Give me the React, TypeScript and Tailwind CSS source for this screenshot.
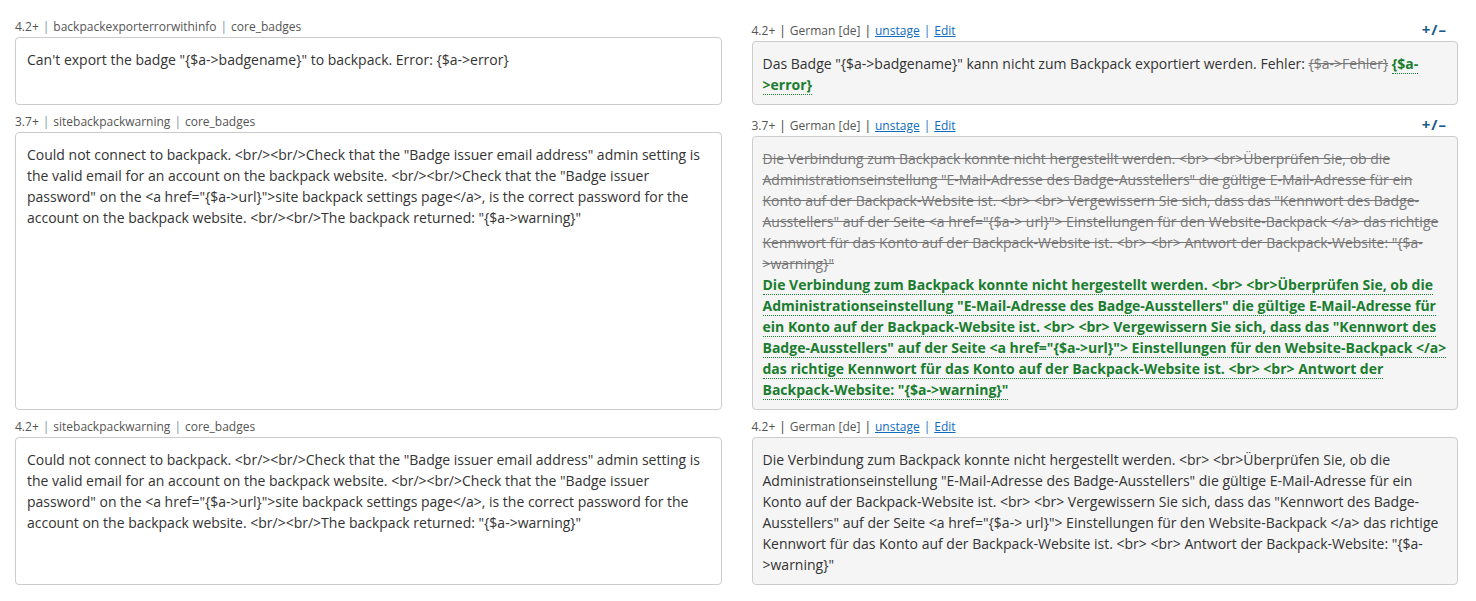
const Meta = ({ version, rest }: { version: string; rest: string[] }) => (
  <div className="text-[12px] leading-[20px] text-[#555]">
    {version}
    {rest.map((r) => (
      <span key={r}>
        <span className="mx-[4px] text-[#7a8fa6]">|</span>
        {r}
      </span>
    ))}
  </div>
);

const LangMeta = ({ version, toggle }: { version: string; toggle?: boolean }) => (
  <div className="flex items-end justify-between">
    <div className="text-[12px] leading-[20px] text-[#555]">
      {version}
      <span className="mx-[4px] text-[#333]">|</span>
      German [de]
      <span className="mx-[4px] text-[#333]">|</span>
      <a className="text-[#0f6cbf] underline">unstage</a>
      <span className="mx-[4px] text-[#0f6cbf]">|</span>
      <a className="text-[#0f6cbf] underline">Edit</a>
    </div>
    {toggle && (
      <span className="mr-[11px] text-[15px] leading-[24px] font-bold tracking-[1px] text-[#1a5a8c]">+/–</span>
    )}
  </div>
);

const Del = ({ children }: { children: React.ReactNode }) => <del className="text-[#777]">{children}</del>;

const Ins = ({ children }: { children: React.ReactNode }) => (
  <ins className="border-b border-dotted border-[#1a7d2f] font-bold text-[#1a7d2f] no-underline">{children}</ins>
);

const enError = 'Can\'t export the badge "{$a->badgename}" to backpack. Error: {$a->error}';
const deError = 'Das Badge "{$a->badgename}" kann nicht zum Backpack exportiert werden. Fehler: ';

const enText =
  'Could not connect to backpack. <br/><br/>Check that the "Badge issuer email address" admin setting is the valid email for an account on the backpack website. <br/><br/>Check that the "Badge issuer password" on the <a href="{$a->url}">site backpack settings page</a>, is the correct password for the account on the backpack website. <br/><br/>The backpack returned: "{$a->warning}"';

const deOld =
  'Die Verbindung zum Backpack konnte nicht hergestellt werden. <br> <br>Überprüfen Sie, ob die Administrationseinstellung "E-Mail-Adresse des Badge-Ausstellers" die gültige E-Mail-Adresse für ein Konto auf der Backpack-Website ist. <br> <br> Vergewissern Sie sich, dass das "Kennwort des Badge-Ausstellers" auf der Seite <a href="{$a-> url}"> Einstellungen für den Website-Backpack </a> das richtige Kennwort für das Konto auf der Backpack-Website ist. <br> <br> Antwort der Backpack-Website: "{$a->warning}"';

const deNew =
  'Die Verbindung zum Backpack konnte nicht hergestellt werden. <br> <br>Überprüfen Sie, ob die Administrationseinstellung "E-Mail-Adresse des Badge-Ausstellers" die gültige E-Mail-Adresse für ein Konto auf der Backpack-Website ist. <br> <br> Vergewissern Sie sich, dass das "Kennwort des Badge-Ausstellers" auf der Seite <a href="{$a->url}"> Einstellungen für den Website-Backpack </a> das richtige Kennwort für das Konto auf der Backpack-Website ist. <br> <br> Antwort der Backpack-Website: "{$a->warning}"';

const Row = ({ left, right }: { left: React.ReactNode; right: React.ReactNode }) => (
  <div className="grid grid-cols-2 gap-[30px]">
    {left}
    {right}
  </div>
);

const EnCell = ({ meta, children }: { meta: React.ReactNode; children: React.ReactNode }) => (
  <div className="flex flex-col">
    {meta}
    <div className="flex-1 rounded-[4px] border border-[#ccc] bg-white px-[11px] pt-[11px] pb-[20px]">{children}</div>
  </div>
);

const DeCell = ({ meta, children }: { meta: React.ReactNode; children: React.ReactNode }) => (
  <div className="flex flex-col">
    {meta}
    <div className="flex-1 rounded-[4px] border border-[#ccc] bg-[#f5f5f5] px-[10px] pt-[11px] pb-[9px]">{children}</div>
  </div>
);

export default function App() {
  return (
    <div
      className="flex w-[1476px] flex-col gap-[7px] bg-white pt-[17px] pr-[18px] pl-[15px] text-[14px] leading-[21px] text-[#333]"
      style={{ fontFamily: '"Open Sans", sans-serif' }}
    >
      <Row
        left={
          <EnCell meta={<Meta version="4.2+" rest={['backpackexporterrorwithinfo', 'core_badges']} />}>{enError}</EnCell>
        }
        right={
          <DeCell meta={<LangMeta version="4.2+" toggle />}>
            <span>{deError}</span>
            <Del>{'{$a->Fehler}'}</Del> <Ins>{'{$a->error}'}</Ins>
          </DeCell>
        }
      />
      <Row
        left={<EnCell meta={<Meta version="3.7+" rest={['sitebackpackwarning', 'core_badges']} />}>{enText}</EnCell>}
        right={
          <DeCell meta={<LangMeta version="3.7+" toggle />}>
            <Del>{deOld}</Del>
            <br />
            <Ins>{deNew}</Ins>
          </DeCell>
        }
      />
      <Row
        left={<EnCell meta={<Meta version="4.2+" rest={['sitebackpackwarning', 'core_badges']} />}>{enText}</EnCell>}
        right={<DeCell meta={<LangMeta version="4.2+" />}>{deOld}</DeCell>}
      />
    </div>
  );
}
